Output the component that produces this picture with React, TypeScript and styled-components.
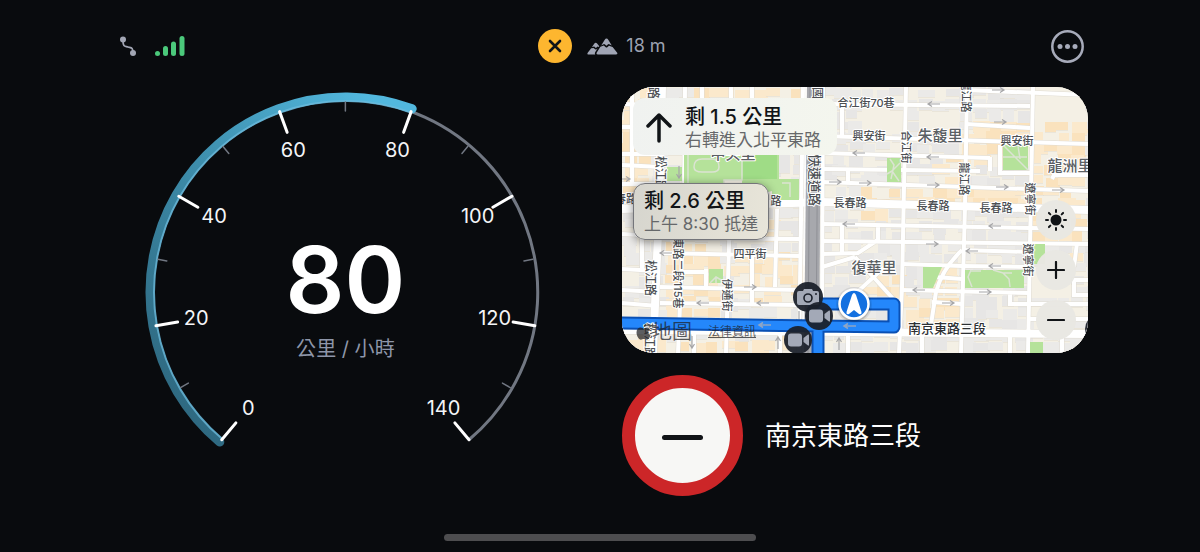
import React from "react";
import styled, { createGlobalStyle } from "styled-components";

const GlobalStyle = createGlobalStyle`
  * { box-sizing: border-box; }
  body { margin: 0; background: #090b0e; }
`;

const fontStack = `Inter, "Noto Sans CJK TC", sans-serif`;

const Screen = styled.main`
  min-height: 100vh;
  display: flex;
  flex-direction: column;
  background: #090b0e;
  color: #fff;
  font-family: ${fontStack};
`;

const StatusBar = styled.header`
  display: grid;
  grid-template-columns: 1fr auto 1fr;
  align-items: center;
  padding: 29px 112px 0;
`;

const StatusGroup = styled.div<{ $align?: "start" | "end"; $gap: number }>`
  display: flex;
  align-items: center;
  justify-content: flex-${(p) => p.$align ?? "start"};
  gap: ${(p) => p.$gap}px;
  padding: 0 4px 0 8px;
`;

const IconButton = styled.button`
  display: flex;
  padding: 0;
  border: 0;
  background: none;
  cursor: pointer;
`;

const CloseButton = styled(IconButton)`
  width: 34px;
  height: 34px;
  align-items: center;
  justify-content: center;
  border-radius: 50%;
  background: #fdb62f;
`;

const Altitude = styled.span`
  display: flex;
  align-items: center;
  gap: 8px;
  font-size: 18px;
  line-height: 24px;
  color: #9ca2b1;
`;

const Columns = styled.div`
  flex: 1;
  display: grid;
  grid-template-columns: 1fr 1fr;
  gap: 44px;
  padding: 24px 112px 0;
`;

const DialPanel = styled.section`
  display: flex;
  justify-content: center;
  align-items: flex-start;
`;

const Dial = styled.svg`
  width: 86%;
  height: auto;
  font-family: ${fontStack};
`;

const RightPanel = styled.section`
  display: flex;
  flex-direction: column;
  gap: 22px;
`;

const MapCard = styled.div`
  position: relative;
  overflow: hidden;
  border-radius: 32px;
  background: #f5f1e6;
  color: #111417;
`;

const MapSvg = styled.svg`
  display: block;
  width: 100%;
  height: auto;
  font-family: ${fontStack};
`;

const MapCards = styled.div`
  position: absolute;
  top: 11px;
  left: 11px;
  display: flex;
  flex-direction: column;
  align-items: flex-start;
  gap: 28px;
`;

const InfoCard = styled.div<{ $outlined?: boolean }>`
  display: flex;
  align-items: center;
  gap: 12px;
  height: 57px;
  padding: ${(p) => (p.$outlined ? "1px 10px 0" : "3px 16px 0 12px")};
  border-radius: 12px;
  border: ${(p) => (p.$outlined ? "1px solid #74757a" : "0")};
  background: ${(p) =>
    p.$outlined
      ? "linear-gradient(100deg, #d6d5ce, #e8e5d9)"
      : "linear-gradient(100deg, #f0f2f0, #f4f6ee)"};
  box-shadow: ${(p) => (p.$outlined ? "0 2px 10px rgba(0, 0, 0, 0.45)" : "none")};
`;

const InfoTitle = styled.div`
  font-size: 20px;
  line-height: 24px;
  font-weight: 500;
  white-space: nowrap;
`;

const InfoDetail = styled.div`
  font-size: 17px;
  line-height: 23px;
  color: #66686a;
  white-space: nowrap;
`;

const MapControls = styled.div`
  position: absolute;
  top: 113px;
  right: 12px;
  display: flex;
  flex-direction: column;
  gap: 10px;
`;

const MapButton = styled.button`
  display: flex;
  align-items: center;
  justify-content: center;
  width: 40px;
  height: 40px;
  padding: 0;
  border: 0;
  border-radius: 50%;
  background: rgba(232, 231, 226, 0.97);
  cursor: pointer;
`;

const Attribution = styled.div`
  position: absolute;
  left: 14px;
  bottom: 8px;
  display: flex;
  align-items: center;
  gap: 16px;
  color: rgba(30, 32, 36, 0.72);
`;

const MapBrand = styled.span`
  display: flex;
  align-items: center;
  gap: 1px;
  font-size: 20px;
  line-height: 26px;
`;

const LegalLink = styled.a`
  font-size: 12px;
  line-height: 16px;
  color: inherit;
`;

const RoadInfo = styled.div`
  display: flex;
  align-items: center;
  gap: 22px;
`;

const LimitSign = styled.div`
  display: flex;
  align-items: center;
  justify-content: center;
  width: 121px;
  height: 121px;
  border: 13px solid #cc2628;
  border-radius: 50%;
  background: #f7f7f5;
`;

const LimitDash = styled.span`
  width: 41px;
  height: 5px;
  margin-top: 4px;
  border-radius: 3px;
  background: #111417;
`;

const RoadName = styled.h1`
  margin: 0;
  font-size: 26px;
  line-height: 36px;
  font-weight: 400;
`;

const HomeBar = styled.div`
  align-self: center;
  width: 26%;
  height: 7px;
  margin-bottom: 11px;
  border-radius: 4px;
  background: #4d4d4f;
`;

/* Speed dial: 0 to 140 is spread over 280 degrees, two degrees per unit. */
const polar = (speed: number, r: number) => {
  const a = ((speed * 2 - 140) * Math.PI) / 180;
  return { x: r * Math.sin(a), y: -r * Math.cos(a) };
};

const arc = (from: number, to: number, r: number) => {
  const a = polar(from, r);
  const b = polar(to, r);
  return `M${a.x} ${a.y}A${r} ${r} 0 ${(to - from) * 2 > 180 ? 1 : 0} 1 ${b.x} ${b.y}`;
};

const dialLabels = [
  { value: 0, x: -97, y: 115 },
  { value: 20, x: -149, y: 26 },
  { value: 40, x: -131, y: -76 },
  { value: 60, x: -52, y: -142 },
  { value: 80, x: 52, y: -142 },
  { value: 100, x: 132, y: -76 },
  { value: 120, x: 149, y: 26 },
  { value: 140, x: 98, y: 115 },
];

function SpeedDial({ speed }: { speed: number }) {
  const ticks = Array.from({ length: 15 }, (_, i) => i * 10);
  return (
    <Dial viewBox="-200 -205 400 360" role="img" aria-label={`${speed} 公里 / 小時`}>
      <defs>
        <linearGradient id="progress" x1="0" y1="1" x2="0.85" y2="0">
          <stop offset="0" stopColor="#2b6076" />
          <stop offset="0.5" stopColor="#3b88a5" />
          <stop offset="1" stopColor="#52b8de" />
        </linearGradient>
      </defs>
      <path d={arc(0, 140, 192)} fill="none" stroke="#717782" strokeWidth="3" />
      <path
        d={arc(0, speed, 195)}
        fill="none"
        stroke="url(#progress)"
        strokeWidth="9"
        strokeLinecap="round"
      />
      <path d={arc(0, speed, 191)} fill="none" stroke="#6cbbdc" strokeOpacity="0.75" strokeWidth="2" />
      {ticks.map((t) => {
        const major = t % 20 === 0;
        const a = polar(t, major ? 192 : 190);
        const b = polar(t, major ? 170 : 181);
        return (
          <line
            key={t}
            x1={a.x}
            y1={a.y}
            x2={b.x}
            y2={b.y}
            stroke={major ? "#fff" : "#717782"}
            strokeWidth={major ? 3 : 1.5}
            strokeLinecap="round"
          />
        );
      })}
      {dialLabels.map((l) => (
        <text key={l.value} x={l.x} y={l.y + 7} textAnchor="middle" fontSize="20" fill="#f4f5f7">
          {l.value}
        </text>
      ))}
      <text y="21" textAnchor="middle" fontSize="92" fontWeight="600" fill="#fff">
        {speed}
      </text>
      <text y="64" textAnchor="middle" fontSize="20" fill="#8e96a9">
        公里 / 小時
      </text>
    </Dial>
  );
}

type Box = [number, number, number, number];

const warmZones: Box[] = [
  [0, 0, 34, 122],
  [66, 0, 114, 56],
  [42, 152, 62, 84],
  [106, 166, 72, 50],
  [112, 128, 44, 24],
  [244, 98, 96, 20],
  [238, 118, 22, 18],
  [344, 34, 66, 48],
  [316, 70, 26, 50],
  [344, 100, 62, 20],
  [410, 34, 56, 66],
  [410, 104, 56, 48],
  [282, 206, 32, 34],
  [312, 178, 30, 62],
  [244, 184, 36, 26],
  [452, 166, 14, 14],
  [0, 248, 180, 18],
];

const openZones: Box[] = [
  [412, 0, 54, 34],
  [232, 22, 48, 24],
  [290, 22, 50, 22],
  [410, 180, 40, 30],
];

const inside = (x: number, y: number, boxes: Box[]) =>
  boxes.some(([bx, by, bw, bh]) => x >= bx && x < bx + bw && y >= by && y < by + bh);

const noise = (n: number) => {
  const v = Math.sin(n * 12.9898) * 43758.5453;
  return v - Math.floor(v);
};

const buildings = Array.from({ length: 34 * 24 }, (_, i) => {
  const x = (i % 34) * 14 + noise(i) * 4;
  const y = Math.floor(i / 34) * 11 + noise(i + 900) * 3;
  const warm = inside(x + 6, y + 5, warmZones);
  const open = inside(x + 6, y + 5, openZones);
  return {
    x: Math.round(x),
    y: Math.round(y),
    w: Math.round(10 + noise(i + 300) * 8),
    h: Math.round(7 + noise(i + 600) * 6),
    fill: warm ? (noise(i + 50) > 0.6 ? "#fae2bd" : "#fbe9cc") : noise(i + 70) > 0.5 ? "#e7e6e5" : "#ebeae8",
    hidden: open || noise(i + 1200) < 0.1,
  };
}).filter((b) => !b.hidden);

const parks = [
  "M62 62H157V93Q157 103 146 105H120V100H62Z",
  "M45 80H60V94H45Z",
  "M150 92H177V113H150Z",
  "M87 182H101V196H87Z",
  "M265 71H279V95H265Z",
  "M381 58H406V83H381Z",
  "M343 183H402V201H343Z",
  "M301 180H320L311 201H301Z",
  "M412 157H423V177H412Z",
  "M408 255H421V266H408Z",
];

const mainRoads = ["M40 0L37 123L31 266", "M0 122L200 115L466 123", "M0 243L466 247"];

const roads = [
  "M63 0L62 120L56 266",
  "M109 0V56M108 122L104 266",
  "M155 122L153 200",
  "M181 0L177 266",
  "M201 0L200 240",
  "M284 0L280 200L277 266",
  "M345 0L343 120L339 266",
  "M411 0L406 266",
  "M455 156L452 180M466 193H452V208H466",
  "M0 17L33 18M0 40H38M0 67H38M0 78L38 80M0 97H38",
  "M0 147L36 149M0 182L36 184M0 203L36 205M10 0V97M20 123V182",
  "M65 15H180M80 0V56M130 0V56",
  "M145 105V122",
  "M44 141H62M56 151L178 152M38 166L178 169M38 200L178 203M38 216L178 218",
  "M84 182V200M130 170V217M60 185H84",
  "M200 17L408 19M344 3L466 8M344 37L408 41",
  "M200 49L466 57M200 66L368 71M200 82L358 84",
  "M200 95L466 104",
  "M200 137L466 142M200 154L466 157M256 137V153L236 166L200 167",
  "M220 137V165M226 82V95M220 17V49M368 84V70M378 58V86H408",
  "M280 177L340 179L408 180M340 163L408 165",
  "M340 163Q320 182 314 205L308 244",
  "M280 203L408 206M313 190L340 192M310 215L340 217M388 206V217H466",
  "M233 170L275 216M232 208L268 175M200 180L233 170",
  "M430 92L432 88H466M408 232H466M440 247V266M300 247V266M226 247V266M388 247V266",
  "M72 240V266M158 240V266M0 216L36 219",
];

const parkPaths = [
  "M72 80Q72 72 80 72H90Q97 72 97 80Q97 85 90 85H80Q72 85 72 80Z",
  "M88 196L94 190L101 194M94 190V196",
  "M268 72L272 78L269 92M278 76L270 84L277 94M265 87L270 84",
  "M381 58L406 83M381 70H405M396 59L398 72",
  "M349 183L346 190L350 200M349 184H359M371 183L381 186H390M381 186L387 192L388 200",
  "M160 96H168V110M120 68V93H102V98H66V68",
];

/* One-way arrows: position and direction in degrees. */
const arrows: [number, number, number][] = [
  [2, 92, 0], [57, 85, 90], [44, 166, 180], [81, 216, 180], [141, 216, 180],
  [128, 200, 0], [237, 66, 180], [213, 95, 0], [243, 96, 0], [311, 98, 0],
  [312, 17, 180], [311, 70, 180], [378, 35, 0], [376, 3, 0], [380, 100, 0],
  [436, 103, 0], [227, 137, 180], [310, 157, 0], [373, 139, 180],
  [350, 164, 180], [373, 179, 180], [297, 203, 180], [363, 205, 0],
  [326, 216, 0], [177, 230, 90], [70, 255, 90], [156, 256, 270],
  [217, 257, 270],
];

const streetLabels: { text: string; x: number; y: number; size: number; turn?: boolean; tone?: string }[] = [
  { text: "合江街70巷", x: 244, y: 16, size: 11 },
  { text: "興安街", x: 247, y: 49, size: 11 },
  { text: "興安街", x: 395, y: 54, size: 11 },
  { text: "長春路", x: 228, y: 116, size: 11 },
  { text: "長春路", x: 311, y: 119, size: 11 },
  { text: "長春路", x: 374, y: 121, size: 11 },
  { text: "四平街", x: 128, y: 167, size: 11 },
  { text: "春路", x: 4, y: 112, size: 11 },
  { text: "路", x: 154, y: 114, size: 11 },
  { text: "朱馥里", x: 318, y: 49, size: 15, tone: "#5b6064" },
  { text: "龍洲里", x: 448, y: 79, size: 15, tone: "#5b6064" },
  { text: "復華里", x: 252, y: 181, size: 15, tone: "#5b6064" },
  { text: "中央里", x: 111, y: 67, size: 15, tone: "#5b6064" },
  { text: "松江路", x: 31, y: -6, size: 12, turn: true },
  { text: "松江路", x: 38, y: 87, size: 12, turn: true },
  { text: "松江路", x: 28, y: 191, size: 12, turn: true },
  { text: "松江路", x: 27, y: 254, size: 12, turn: true },
  { text: "東路二段115巷", x: 56, y: 186, size: 11, turn: true },
  { text: "伊通街", x: 105, y: 208, size: 11, turn: true },
  { text: "建國", x: 195, y: 0, size: 12, turn: true },
  { text: "快速道路", x: 193, y: 93, size: 13, turn: true },
  { text: "合江街", x: 284, y: 60, size: 11, turn: true },
  { text: "龍江路", x: 344, y: 9, size: 11, turn: true },
  { text: "龍江路", x: 342, y: 92, size: 11, turn: true },
  { text: "遼寧街", x: 408, y: 112, size: 11, turn: true },
  { text: "遼寧街", x: 406, y: 173, size: 11, turn: true },
  { text: "南京東路三段", x: 325, y: 241, size: 13, tone: "#2d3033" },
];

const Label = styled.text`
  paint-order: stroke;
  stroke: #fff;
  stroke-width: 2px;
  stroke-linejoin: round;
  font-weight: 500;
  text-anchor: middle;
`;

function VideoMarker({ x, y }: { x: number; y: number }) {
  return (
    <g transform={`translate(${x} ${y})`}>
      <circle r="14" fill="#1b202b" fillOpacity="0.94" />
      <rect x="-10" y="-6.5" width="14" height="13" rx="3" fill="#a3a9b7" />
      <path d="M5.5 -2L10 -5.5Q11 -6 11 -4.5V4.5Q11 6 10 5.5L5.5 2Z" fill="#a3a9b7" />
    </g>
  );
}

function StreetMap() {
  const route = "M-8 236L196 239L272 240V217H186M196 240V276";
  return (
    <MapSvg viewBox="0 0 466 266" role="img" aria-label="地圖">
      <rect width="466" height="266" fill="#f4f0e5" />
      {buildings.map((b, i) => (
        <g key={i}>
          <rect x={b.x} y={b.y + 1} width={b.w} height={b.h} fill="#dfd9cd" fillOpacity="0.5" />
          <rect x={b.x} y={b.y} width={b.w} height={b.h} fill={b.fill} />
        </g>
      ))}
      <g fill="none" stroke="#dfdbd2">
        {mainRoads.map((d) => (
          <path key={d} d={d} strokeWidth="9" />
        ))}
        {roads.map((d) => (
          <path key={d} d={d} strokeWidth="5" />
        ))}
      </g>
      <g fill="none" stroke="#fff">
        {mainRoads.map((d) => (
          <path key={d} d={d} strokeWidth="8" />
        ))}
        {roads.map((d) => (
          <path key={d} d={d} strokeWidth="4" />
        ))}
      </g>
      {parks.map((d) => (
        <path key={d} d={d} fill="#b5e29a" />
      ))}
      <path d="M120 68H155V92H120Z" fill="#9fdc86" />
      <path d="M102 93H120V105H102Z" fill="#f3efe4" />
      {parkPaths.map((d) => (
        <path key={d} d={d} fill="none" stroke="#dbe3d2" strokeWidth="1.5" />
      ))}
      <path d="M183 0H199L196 266H180Z" fill="#fff" opacity="0.8" />
      <path d="M185 0H199L197 266H182Z" fill="#a7a8ad" />
      <path d="M188 0L186 266M196 0L194 266" fill="none" stroke="#8f9096" />
      <path d="M196 0H200L199 32H196Z" fill="#a3d68c" />
      {arrows.map(([x, y, turn], i) => (
        <path
          key={i}
          d="M-6 0H5M2 -2.5L6 0L2 2.5"
          transform={`translate(${x} ${y}) rotate(${turn})`}
          fill="none"
          stroke="#a6a6a8"
          strokeWidth="1.2"
        />
      ))}
      <path d={route} fill="none" stroke="#0a50b4" strokeWidth="13" strokeLinejoin="round" />
      <path d={route} fill="none" stroke="#2487fb" strokeWidth="9" strokeLinejoin="round" />
      <path
        d="M149 238H137M141 235.5L137 238L141 240.5M234 239H222M226 236.5L222 239L226 241.5"
        fill="none"
        stroke="#8fa5c4"
        strokeWidth="1.5"
      />
      {streetLabels.map((l, i) => (
        <Label
          key={i}
          transform={`translate(${l.x} ${l.y})${l.turn ? " rotate(90)" : ""}`}
          y={l.size * 0.36}
          fontSize={l.size}
          fill={l.tone ?? "#4c4f53"}
        >
          {l.text}
        </Label>
      ))}
      <g transform="translate(186 210)">
        <circle r="15" fill="#1b202b" fillOpacity="0.94" />
        <path
          d="M-9 -6H-5L-4 -8H4L5 -6H9Q11 -6 11 -4V6Q11 8 9 8H-9Q-11 8 -11 6V-4Q-11 -6 -9 -6Z"
          fill="#a3a9b7"
        />
        <circle cy="1" r="4" fill="none" stroke="#1b202b" strokeWidth="1.6" />
        <circle cx="8" cy="-3" r="1" fill="#1b202b" />
      </g>
      <VideoMarker x={176} y={253} />
      <VideoMarker x={197} y={229} />
      <circle cx="477" cy="242" r="14" fill="#1b202b" fillOpacity="0.94" />
      <circle cx="232" cy="218" r="18" fill="#000" fillOpacity="0.08" />
      <circle cx="232" cy="218" r="16.5" fill="#000" fillOpacity="0.15" />
      <circle cx="232" cy="217" r="14.5" fill="#1370e0" stroke="#fff" strokeWidth="2.5" />
      <path d="M232 206Q233 206 234 208L239.500 225Q240 228 237 227L232 223L227 227Q224 228 224.500 225L230 208Q231 206 232 206Z" fill="#fff" />
    </MapSvg>
  );
}

export default function App() {
  return (
    <Screen>
      <GlobalStyle />
      <StatusBar>
        <StatusGroup $gap={19}>
          <svg width="16" height="20" viewBox="0 0 16 20" aria-label="路線">
            <circle cx="3" cy="3.500" r="3" fill="#a2a6b4" />
            <circle cx="13" cy="17" r="3" fill="#a2a6b4" />
            <path d="M3 5C3 11 5 10 8 11C11 12 13 11 13 17" fill="none" stroke="#a2a6b4" strokeWidth="1.7" />
          </svg>
          <svg width="30" height="20" viewBox="0 0 30 20" fill="#4bc97b" aria-label="訊號">
            <circle cx="2.500" cy="17.500" r="2.500" />
            <rect x="8" y="10" width="5" height="10" rx="2.500" />
            <rect x="16" y="5.500" width="5" height="14.500" rx="2.500" />
            <rect x="24.500" y="0" width="5" height="20" rx="2.500" />
          </svg>
        </StatusGroup>
        <StatusGroup $gap={15}>
          <CloseButton aria-label="關閉">
            <svg width="14" height="14" viewBox="0 0 14 14">
              <path d="M2 2L12 12M12 2L2 12" stroke="#111417" strokeWidth="2.600" strokeLinecap="round" />
            </svg>
          </CloseButton>
          <Altitude>
            <svg width="31" height="17" viewBox="0 0 31 17" fill="#a0a5b4" aria-hidden="true">
              <path d="M14.200 7.500L17.600 2Q19.500 -0.800 21.400 2L24.800 7.500L22.300 6.200Q21.500 5.800 20.800 6.500L19.500 7.800L18 6.400Q17.300 5.800 16.500 6.200Z" />
              <path d="M13.400 8.800L16.800 7.600L18.700 9.200Q19.500 9.900 20.300 9.200L22 7.700L25.600 8.900L30 14.500Q31.200 16.500 28.800 16.500H11Q8.800 16.500 9.800 14.600Z" />
              <path d="M5 9L7.200 5.800Q8.700 3.800 10.300 5.800L12.300 8.200L11.700 9L10.600 8.600L8.900 10L7.200 8.600Z" />
              <path d="M4.200 10.200L6.500 9.900L8.200 11.200Q8.900 11.700 9.600 11.200L10.600 10.400L8.300 14Q7.500 15.500 8.200 16.500H2Q-0.600 16.500 0.900 14.400Z" />
            </svg>
            18 m
          </Altitude>
        </StatusGroup>
        <StatusGroup $align="end" $gap={0}>
          <IconButton aria-label="更多">
            <svg width="33" height="33" viewBox="0 0 33 33" fill="#a7abba">
              <circle cx="16.500" cy="16.500" r="15.200" fill="none" stroke="#a7abba" strokeWidth="2.500" />
              <circle cx="9" cy="16.500" r="2.500" />
              <circle cx="16.500" cy="16.500" r="2.500" />
              <circle cx="24" cy="16.500" r="2.500" />
            </svg>
          </IconButton>
        </StatusGroup>
      </StatusBar>
      <Columns>
        <DialPanel>
          <SpeedDial speed={80} />
        </DialPanel>
        <RightPanel>
          <MapCard>
            <StreetMap />
            <MapCards>
              <InfoCard>
                <svg width="28" height="30" viewBox="0 0 28 30" aria-hidden="true">
                  <path
                    d="M14 28V3M3 13L14 2L25 13"
                    fill="none"
                    stroke="#111417"
                    strokeWidth="3.500"
                    strokeLinecap="round"
                    strokeLinejoin="round"
                  />
                </svg>
                <div>
                  <InfoTitle>剩 1.5 公里</InfoTitle>
                  <InfoDetail>右轉進入北平東路</InfoDetail>
                </div>
              </InfoCard>
              <InfoCard $outlined>
                <div>
                  <InfoTitle>剩 2.6 公里</InfoTitle>
                  <InfoDetail>上午 8:30 抵達</InfoDetail>
                </div>
              </InfoCard>
            </MapCards>
            <MapControls>
              <MapButton aria-label="日間模式">
                <svg width="24" height="24" viewBox="-12 -12 24 24">
                  <circle r="5.500" fill="#111417" />
                  {[0, 45, 90, 135, 180, 225, 270, 315].map((a) => (
                    <path
                      key={a}
                      d="M0 -8V-10"
                      transform={`rotate(${a})`}
                      stroke="#111417"
                      strokeWidth="2"
                      strokeLinecap="round"
                    />
                  ))}
                </svg>
              </MapButton>
              <MapButton aria-label="放大">
                <svg width="18" height="18" viewBox="0 0 18 18">
                  <path d="M9 1V17M1 9H17" stroke="#111417" strokeWidth="2.200" strokeLinecap="round" />
                </svg>
              </MapButton>
              <MapButton aria-label="縮小">
                <svg width="18" height="18" viewBox="0 0 18 18">
                  <path d="M1 9H17" stroke="#111417" strokeWidth="2.200" strokeLinecap="round" />
                </svg>
              </MapButton>
            </MapControls>
            <Attribution>
              <MapBrand>
                <svg width="15" height="18" viewBox="0 0 15 18" fill="currentColor" aria-hidden="true">
                  <path d="M10.500 0.500Q10.600 3.500 7.600 4.200Q7.400 1.500 10.500 0.500Z" />
                  <path d="M7.600 5.400C8.500 5.400 9.500 4.500 11 4.600Q13 4.700 14 6.200C11.500 7.800 12 11 14.600 12Q13 16.500 11 16.700C9.800 16.700 9.300 16 7.900 16C6.500 16 6 16.700 4.900 16.700C2.800 16.600 0.500 12.800 0.500 9.500C0.500 6.200 2.500 4.600 4.600 4.600C5.900 4.600 6.800 5.400 7.600 5.400Z" />
                </svg>
                地圖
              </MapBrand>
              <LegalLink href="#legal">法律資訊</LegalLink>
            </Attribution>
          </MapCard>
          <RoadInfo>
            <LimitSign role="img" aria-label="無速限資料">
              <LimitDash />
            </LimitSign>
            <RoadName>南京東路三段</RoadName>
          </RoadInfo>
        </RightPanel>
      </Columns>
      <HomeBar />
    </Screen>
  );
}
